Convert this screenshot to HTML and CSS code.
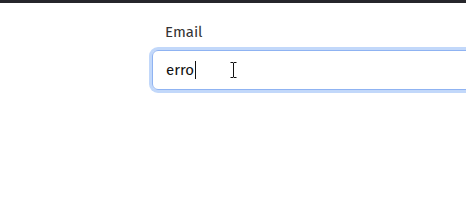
FILE: index.html
```html
<!DOCTYPE html>
<html>
<head>
<meta charset="utf-8">
<link rel="stylesheet" href="styles.css">
</head>
<body>
<div class="topbar"></div>
<div class="page">
  <div class="field">
    <label class="label">Email</label>
    <div class="input">
      <span class="value">erro</span><span class="caret"></span>
      <svg class="ibeam" width="7" height="16" viewBox="0 0 7 16"><path d="M0.5 0.5h2.5l0.5 0.5l0.5 -0.5h2.5M3.5 1v14M0.5 15.5h2.5l0.5 -0.5l0.5 0.5h2.5" stroke="#111" stroke-width="1" fill="none"/></svg>
    </div>
  </div>
</div>
</body>
</html>
```
FILE: styles.css
```css
html, body { margin: 0; padding: 0; background: #fff; }
body { width: 466px; height: 212px; overflow: hidden; font-family: "Fira Sans", "Open Sans", "Noto Sans", sans-serif; }
.topbar { height: 3px; background: #26262b; }
.page { padding-left: 152px; padding-top: 19px; overflow: hidden; padding-bottom: 10px; }
.field { display: flex; flex-direction: column; gap: 8px; margin-right: -40px; }
.label { font-size: 15px; color: #333; padding-left: 13px; line-height: 20px; }
.input { position: relative; box-sizing: border-box; height: 40px; border: 1px solid #8fb3f2; border-radius: 6px; box-shadow: 0 0 0 3px #c2d8fa; display: flex; align-items: center; padding-left: 13px; font-size: 15px; color: #111; }
.value { line-height: 20px; }
.caret { display: inline-block; width: 1px; height: 18px; background: #111; margin-left: 1px; }
.ibeam { position: absolute; left: 77px; top: 11px; }
```
